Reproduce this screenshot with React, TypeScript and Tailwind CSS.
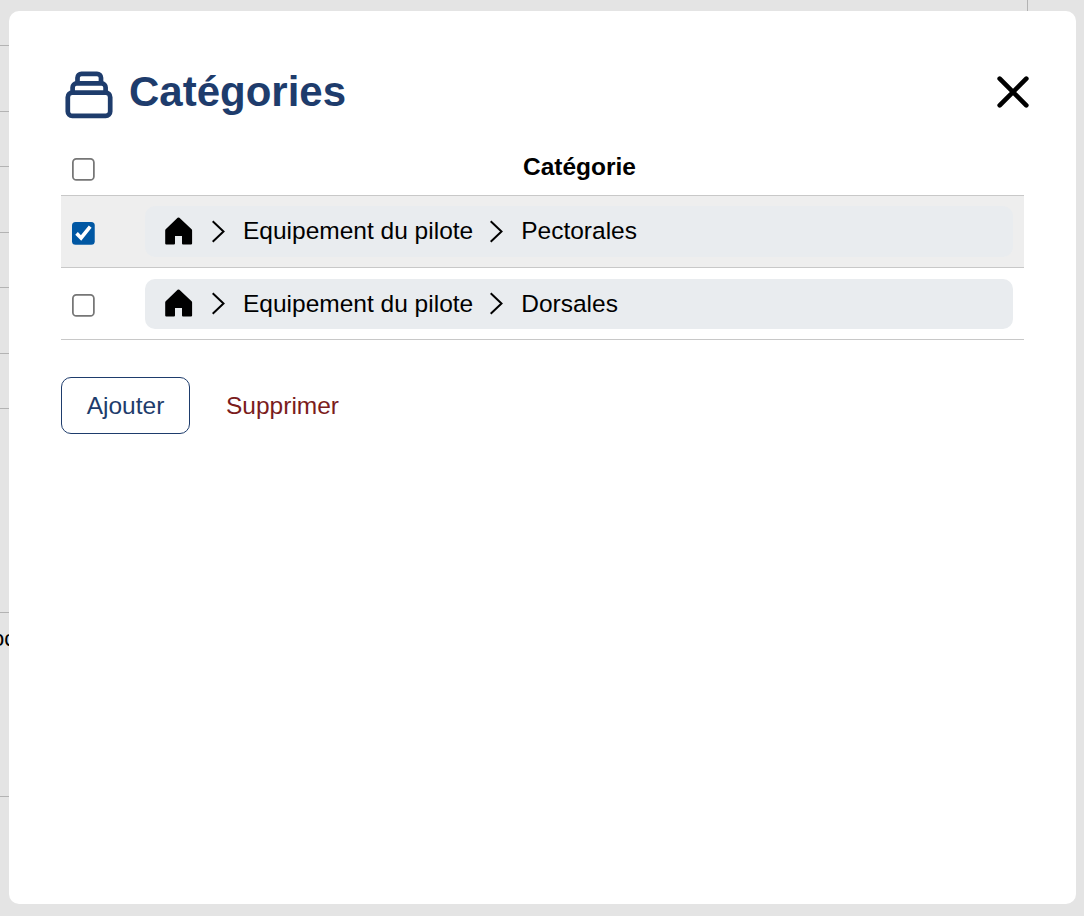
import { useState } from 'react';

type Category = {
  id: number;
  path: string[];
};

const categories: Category[] = [
  { id: 1, path: ['Equipement du pilote', 'Pectorales'] },
  { id: 2, path: ['Equipement du pilote', 'Dorsales'] },
];

function StackIcon() {
  return (
    <svg width="48" height="48" viewBox="0 0 48 48" fill="none" stroke="#1e3c6c" strokeWidth="4.7">
      <rect x="2.8" y="21.7" width="42.4" height="23.2" rx="4.5" />
      <path d="M7.6 21.7V16.4A4 4 0 0 1 11.6 12.4H36.6A4 4 0 0 1 40.6 16.4V21.7" />
      <path d="M12.5 12.4V6.8A4 4 0 0 1 16.5 2.8H32A4 4 0 0 1 36 6.8V12.4" />
    </svg>
  );
}

function CloseIcon() {
  return (
    <svg width="32" height="32" viewBox="0 0 32 32" fill="none" stroke="#000" strokeWidth="4.7" strokeLinecap="round">
      <path d="M2.7 2.7L29.3 29.3M29.3 2.7L2.7 29.3" />
    </svg>
  );
}

function HomeIcon() {
  return (
    <svg className="mb-px shrink-0" width="28" height="28" viewBox="0 0 28 28" fill="#000">
      <path d="M12.6 .8Q13.5 0 14.4 .8L26.6 12.3Q27.1 12.8 27.1 13.5V26.4Q27.1 27.5 26 27.5H18Q17 27.5 17 26.5V18.9H10V26.5Q10 27.5 9 27.5H1.3Q.2 27.5 .2 26.4V13.5Q.2 12.8 .7 12.3Z" />
    </svg>
  );
}

function ChevronIcon() {
  return (
    <svg className="shrink-0" width="14" height="24" viewBox="0 0 14 24" fill="none" stroke="#000" strokeWidth="2">
      <path d="M1.7 1.3L12.5 11.5L1.7 21.7" />
    </svg>
  );
}

function Checkbox({ checked, onChange }: { checked: boolean; onChange: () => void }) {
  return (
    <input
      type="checkbox"
      checked={checked}
      onChange={onChange}
      className="block size-[13.2px] accent-[#0057a3] [zoom:1.75]"
    />
  );
}

function PageBehind() {
  return (
    <div className="absolute inset-0 overflow-hidden bg-[#e4e4e4]">
      <div className="w-[1028px] border-r border-[#b3b3b3]">
        <div className="h-[46px] border-b border-[#b3b3b3]" />
        <div className="h-[66px] border-b border-[#b3b3b3]" />
        <div className="h-[55px] border-b border-[#b3b3b3]" />
        <div className="h-[66px] border-b border-[#b3b3b3]" />
        <div className="h-[55px] border-b border-[#b3b3b3]" />
        <div className="h-[66px] border-b border-[#b3b3b3]" />
        <div className="h-[55px] border-b border-[#b3b3b3]" />
        <div className="h-[204px] border-b border-[#b3b3b3]" />
        <div className="-ml-2 h-[184px] border-b border-[#b3b3b3] pt-3 text-[22px] leading-7">oc</div>
      </div>
    </div>
  );
}

export default function App() {
  const [selected, setSelected] = useState<number[]>([1]);
  const allSelected = selected.length === categories.length;

  const toggle = (id: number) => {
    setSelected((prev) => (prev.includes(id) ? prev.filter((item) => item !== id) : [...prev, id]));
  };

  return (
    <div className="relative h-screen overflow-hidden pt-[11px] pr-2 pb-3 pl-[9px] font-['Liberation_Sans',Arial,sans-serif] text-[24.5px] text-black">
      <PageBehind />

      <div className="relative h-full rounded-[10px] bg-white pt-[52px] pr-[52px] pl-[52px]">
        <div className="flex h-[66px] items-start justify-between">
          <div className="flex items-start pl-1">
            <div className="pt-2">
              <StackIcon />
            </div>
            <h1 className="ml-4 pt-px text-[42px] leading-[56px] font-bold text-[#1e3c6c]">Catégories</h1>
          </div>
          <button className="mt-[13px] -mr-[5px]" aria-label="Fermer">
            <CloseIcon />
          </button>
        </div>

        <table className="w-[963px] table-fixed border-collapse">
          <thead>
            <tr className="h-[66px] border-b border-[#c8c8c8]">
              <th className="w-[73px] pt-4 pl-[11px]">
                <Checkbox
                  checked={allSelected}
                  onChange={() => setSelected(allSelected ? [] : categories.map((c) => c.id))}
                />
              </th>
              <th className="pt-3 pl-px text-center font-bold">Catégorie</th>
            </tr>
          </thead>
          <tbody>
            {categories.map((category) => (
              <tr
                key={category.id}
                className={`group h-[72px] border-b border-[#c8c8c8] ${selected.includes(category.id) ? 'bg-[#eeeeee]' : ''}`}
              >
                <td className="w-[73px] pt-[5px] pl-[11px]">
                  <Checkbox checked={selected.includes(category.id)} onChange={() => toggle(category.id)} />
                </td>
                <td className="px-[11px] pt-px">
                  <div className="flex h-[50px] items-center rounded-[10px] bg-[#e9ecef] pl-5 group-first:h-[51px]">
                    <HomeIcon />
                    {category.path.map((name) => (
                      <div key={name} className="flex items-center">
                        <span className="ml-[18px]">
                          <ChevronIcon />
                        </span>
                        <span className="-mr-[2px] ml-[18px] leading-[34px] group-first:pb-px">{name}</span>
                      </div>
                    ))}
                  </div>
                </td>
              </tr>
            ))}
          </tbody>
        </table>

        <div className="mt-[37px] flex">
          <button className="h-[57px] w-[129px] rounded-[10px] border border-[#1e3c6c] pt-0.5 text-[#1e3c6c]">
            Ajouter
          </button>
          <button className="ml-9 h-[57px] pt-0.5 text-[#7b1c1c]">Supprimer</button>
        </div>
      </div>
    </div>
  );
}
